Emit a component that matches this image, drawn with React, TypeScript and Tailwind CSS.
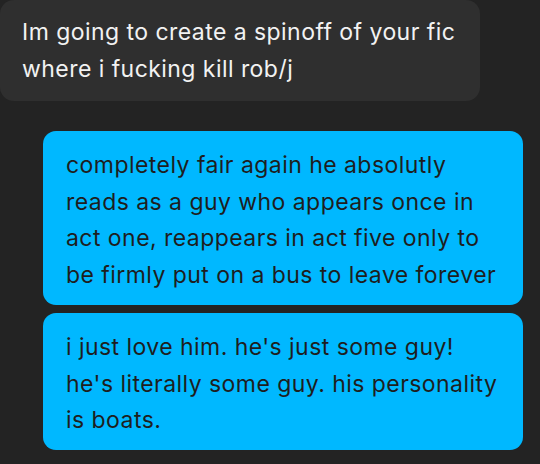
import React from "react"

const font = { fontFamily: "Inter, 'Noto Sans', sans-serif" }

export default function App() {
  return (
    <div
      className="w-[540px] h-[464px] overflow-hidden bg-[#232323] flex flex-col"
      style={font}
    >
      {/* incoming message */}
      <div className="w-[480px] rounded-[14px] bg-[#2f2f2f] pl-[22px] pr-4 pt-[14px] pb-[13px] text-[23px] tracking-[0.45px] leading-[37px] text-[#f2f2f2] whitespace-nowrap">
        Im going to create a spinoff of your fic
        <br />
        where i fucking kill rob/j
      </div>

      {/* outgoing messages */}
      <div className="mt-[30px] ml-[43px] flex flex-col gap-2">
        <div className="w-[480px] rounded-[13px] bg-[#00b8ff] pl-[23px] pr-4 pt-[16px] pb-[11px] text-[23px] tracking-[0.45px] leading-[36.7px] text-[#1e1e1e] whitespace-nowrap">
          completely fair again he absolutly
          <br />
          reads as a guy who appears once in
          <br />
          act one, reappears in act five only to
          <br />
          be firmly put on a bus to leave forever
        </div>
        <div className="w-[480px] rounded-[13px] bg-[#00b8ff] pl-[23px] pr-4 pt-[16px] pb-[11px] text-[23px] tracking-[0.45px] leading-[36.7px] text-[#1e1e1e] whitespace-nowrap">
          i just love him. he's just some guy!
          <br />
          he's literally some guy. his personality
          <br />
          is boats.
        </div>
      </div>
    </div>
  )
}
